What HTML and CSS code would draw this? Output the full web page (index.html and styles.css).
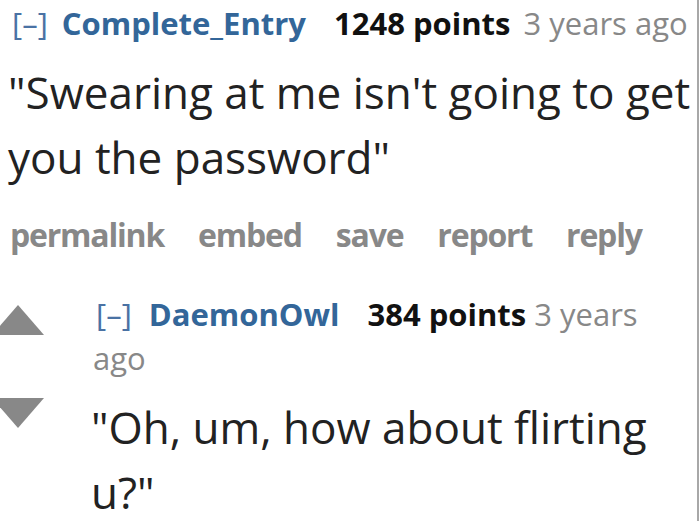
FILE: index.html
```html
<!DOCTYPE html>
<html>
<head>
<meta charset="utf-8">
<link rel="stylesheet" href="styles.css">
</head>
<body>
<div class="frame">
  <div class="comment">
    <div class="entry top">
      <p class="tagline"><span class="expand">[–]</span><span class="author">Complete_Entry</span><span class="score">1248 points</span><span class="time">3 years ago</span></p>
      <div class="md">"Swearing at me isn't going to get you the password"</div>
      <ul class="buttons">
        <li>permalink</li>
        <li>embed</li>
        <li>save</li>
        <li>report</li>
        <li>reply</li>
      </ul>
    </div>
    <div class="child">
      <div class="midcol">
        <span class="arrow up"></span>
        <span class="arrow down"></span>
      </div>
      <div class="entry">
        <p class="tagline"><span class="expand">[–]</span><span class="author">DaemonOwl</span><span class="score">384 points</span><span class="time">3 years</span> <span class="time">ago</span></p>
        <div class="md">"Oh, um, how about flirting u?"</div>
      </div>
    </div>
  </div>
</div>
</body>
</html>
```
FILE: styles.css
```css
html, body {
  margin: 0;
  padding: 0;
  background: #fff;
}
body {
  font-family: "Open Sans", "Noto Sans", sans-serif;
  color: #222;
  overflow: hidden;
}
.frame {
  width: 697px;
  height: 521px;
  border-right: 2px solid #a8a8a8;
  overflow: hidden;
}
.entry.top {
  padding-left: 10px;
}
.tagline {
  margin: 0;
  font-size: 31px;
  line-height: 46px;
  color: #888;
}
.expand {
  color: #4a72a4;
  font-weight: 400;
  margin-right: 14px;
  margin-left: 2px;
}
.author {
  color: #369;
  font-weight: 700;
  margin-right: 28px;
}
.score {
  color: #111;
  font-weight: 700;
  margin-right: 13px;
}
.time {
  color: #888;
}
.md {
  font-size: 44px;
  line-height: 65px;
  color: #222;
  margin-left: -2px;
  margin-top: 14px;
}
.buttons {
  list-style: none;
  margin: 25px 0 0 0;
  padding: 0;
  display: flex;
  gap: 34px;
  font-weight: 700;
  font-size: 32px;
  line-height: 40px;
  color: #888;
  letter-spacing: -1.2px;
}
.child {
  display: flex;
  margin-top: 37px;
}
.midcol {
  width: 93px;
  flex: none;
}
.arrow {
  display: block;
  width: 0;
  height: 0;
  border-left: 26px solid transparent;
  border-right: 26px solid transparent;
  margin-left: -8px;
}
.arrow.up {
  border-bottom: 30px solid #888;
  margin-top: 13px;
}
.arrow.down {
  border-top: 30px solid #888;
  margin-top: 63px;
}
.child .entry {
  flex: 1;
  padding-right: 40px;
}
.child .tagline {
  line-height: 44px;
}
.child .tagline .expand {
  margin-left: 3px;
  margin-right: 17px;
}
.child .tagline .score {
  margin-right: 8px;
}
.child .md {
  margin-top: 15px;
}
```
